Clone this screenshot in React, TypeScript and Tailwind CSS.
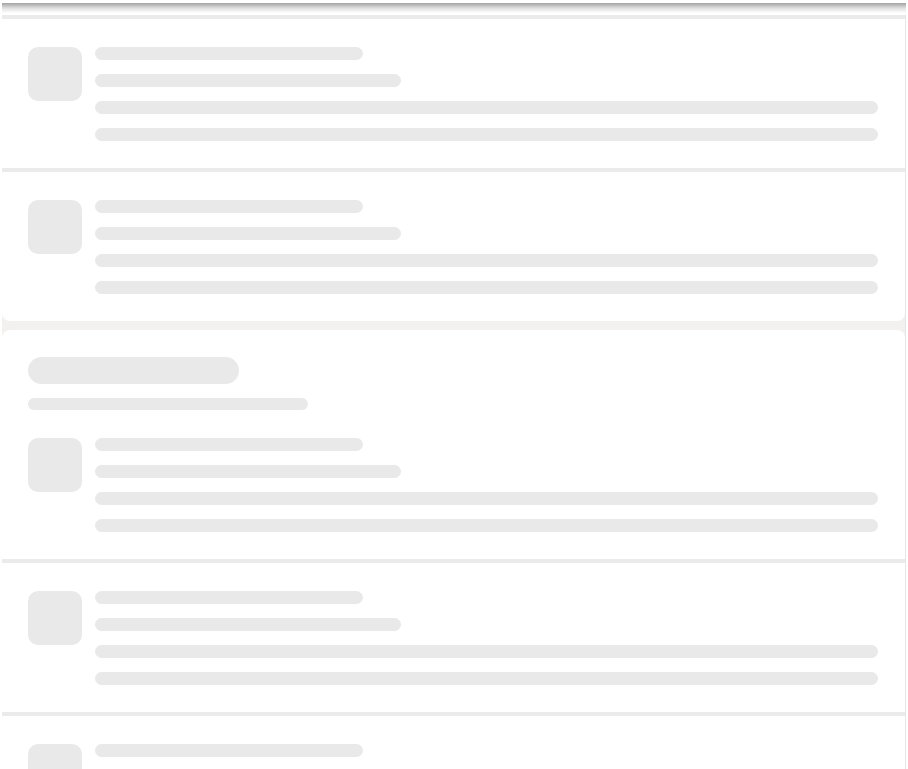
const Bar = ({ className }: { className: string }) => (
    <div className={`h-[13px] rounded-full bg-[#e9e9e9] ${className}`} />
);

const SkeletonRow = ({ divider }: { divider?: boolean }) => (
    <div
        className={`flex gap-[13px] pl-[26px] pr-[27px] pt-[28px] pb-[27px] ${
            divider ? "border-b-4 border-[#ebebeb]" : ""
        }`}
    >
        <div className="w-[54px] h-[54px] shrink-0 rounded-[10px] bg-[#e9e9e9]" />
        <div className="flex-1 flex flex-col gap-[14px]">
            <Bar className="w-[268px]" />
            <Bar className="w-[306px]" />
            <Bar className="w-full" />
            <Bar className="w-full" />
        </div>
    </div>
);

const App = () => {
    return (
        <div className="h-screen overflow-hidden bg-white">
            <div className="h-[3px]" />
            <div className="ml-[2px] w-[904px] h-[10px] bg-gradient-to-b from-[#a3a3a3] via-[#dedede] to-white" />
            <div className="h-[2px]" />
            <div className="ml-[2px] w-[904px] border-r border-[#e6e6e6] bg-[#f2f1ef] flex flex-col gap-[9px]">
                <div className="bg-white rounded-b-[8px] border-t-4 border-[#ebebeb]">
                    <SkeletonRow divider />
                    <SkeletonRow />
                </div>
                <div className="bg-white rounded-[8px]">
                    <div className="pl-[26px] pt-[27px]">
                        <div className="w-[211px] h-[27px] rounded-full bg-[#e9e9e9]" />
                        <div className="mt-[14px] w-[280px] h-[12px] rounded-full bg-[#e9e9e9]" />
                    </div>
                    <SkeletonRow divider />
                    <SkeletonRow divider />
                    <SkeletonRow />
                </div>
            </div>
        </div>
    );
};

export default App;
